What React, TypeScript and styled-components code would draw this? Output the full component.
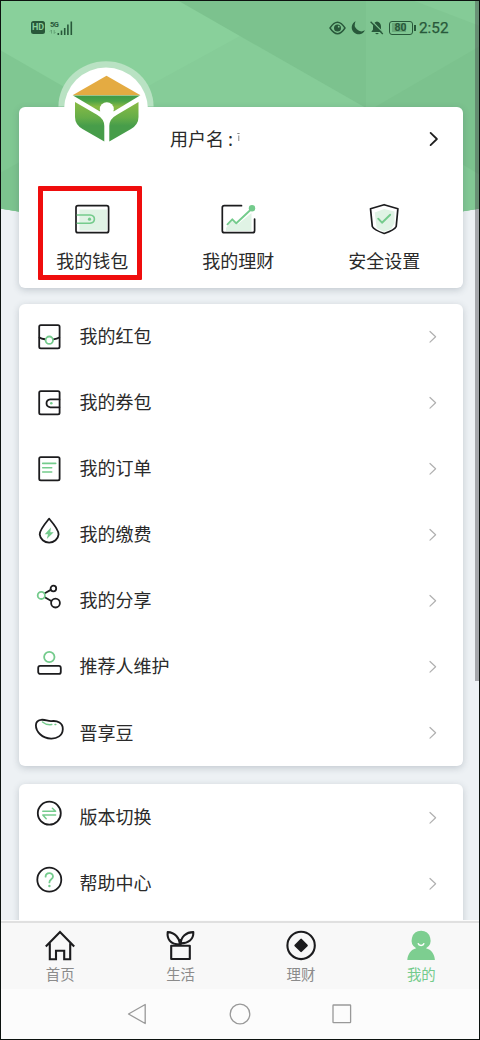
import React from 'react';
import styled, { createGlobalStyle } from 'styled-components';

const INK = '#1c1c1e';
const GREEN = '#74cb8c';
const PALE = '#e0f3e5';
const STATUS = '#28583a';

const GlobalStyle = createGlobalStyle`
  * { box-sizing: border-box; }
  body { margin: 0; font-family: "Noto Sans CJK SC", sans-serif; color: #2a2a2a; }
  svg { display: block; overflow: visible; flex: none; }
`;

const Phone = styled.div`
  position: relative;
  width: 480px;
  height: 1040px;
  display: flex;
  flex-direction: column;
  overflow: hidden;
  background: #fcfcfc;
`;

const Frame = styled.div`
  position: absolute;
  inset: 0;
  border: 1px solid #0c120f;
  pointer-events: none;
`;

const ScrollThumb = styled.div`
  position: absolute;
  top: 1px;
  right: 1px;
  width: 4px;
  height: 680px;
  background: rgba(70, 70, 74, 0.43);
`;

const Viewport = styled.main`
  position: relative;
  height: 920px;
  overflow: hidden;
  background: #edf1f4;
  flex: none;
`;

const Backdrop = styled.svg`
  position: absolute;
  top: 0;
  left: 0;
`;

const StatusBar = styled.div`
  position: relative;
  height: 106.5px;
  padding: 18px 31px 0;
  display: flex;
  justify-content: space-between;
  align-items: flex-start;
  color: ${STATUS};
  font-family: Roboto, sans-serif;
`;

const StatusGroup = styled.div<{ $gap: number }>`
  display: flex;
  align-items: center;
  height: 19px;
  gap: ${(p) => p.$gap}px;
`;

const HdBadge = styled.span`
  width: 14px;
  height: 13px;
  border-radius: 2.5px;
  background: ${STATUS};
  color: #8ad09b;
  font-size: 9px;
  font-weight: 700;
  line-height: 13.5px;
  text-align: center;
`;

const Signal = styled.div`
  display: flex;
  align-items: flex-end;
  height: 14px;
`;

const NetType = styled.span`
  align-self: flex-start;
  width: 7px;
  font-size: 7.5px;
  font-weight: 700;
  line-height: 7px;
  letter-spacing: -0.6px;
`;

const Battery = styled.span`
  position: relative;
  width: 24px;
  height: 14px;
  border: 1.3px solid ${STATUS};
  border-radius: 3px;
  background: linear-gradient(${STATUS}44, ${STATUS}44) 2px 1.5px / 14px 9px no-repeat;
  font-size: 10.5px;
  font-weight: 700;
  line-height: 12px;
  text-align: center;
  &::after {
    content: '';
    position: absolute;
    right: -4px;
    top: 3px;
    width: 1.6px;
    height: 6px;
    background: ${STATUS};
  }
`;

const Clock = styled.span`
  margin-left: 1.5px;
  width: 30px;
  font-size: 15.3px;
  line-height: 19px;
  padding-top: 1px;
  font-weight: 400;
  -webkit-text-stroke: 0.25px ${STATUS};
  white-space: nowrap;
`;

const Card = styled.section<{ $gap?: number }>`
  position: relative;
  width: 444px;
  margin: ${(p) => p.$gap ?? 0}px 0 0 19px;
  border-radius: 6px;
  background: #fff;
  box-shadow: 0 2px 7px rgba(60, 75, 90, 0.24);
`;

const ProfileCard = styled(Card)`
  height: 181.5px;
`;

const Avatar = styled.svg`
  position: absolute;
  left: 37px;
  top: -47.5px;
`;

const UserRow = styled.div`
  height: 64px;
  padding: 0 24px 0 151px;
  display: flex;
  align-items: center;
  font-size: 18px;
`;

const UserName = styled.span`
  padding-bottom: 2px;
  white-space: pre;
`;

const NameRemnant = styled.svg`
  margin: 0 auto 0 4px;
`;

const Shortcuts = styled.div`
  display: grid;
  grid-template-columns: repeat(3, 146px);
  height: 117px;
  padding-top: 32px;
`;

const Shortcut = styled.div`
  display: flex;
  flex-direction: column;
  align-items: center;
  font-size: 18px;
  line-height: 26px;
  gap: 12.4px;
  padding-left: 0.5px;
`;

const Highlight = styled.div`
  position: absolute;
  left: 19px;
  top: 79.5px;
  width: 104px;
  height: 94px;
  border: 5px solid #ef0d0d;
  border-radius: 1px;
`;

const Row = styled.div`
  height: 66.1px;
  padding: 0 25px 0 14px;
  display: flex;
  align-items: center;
  font-size: 18px;
`;

const RowLabel = styled.span`
  flex: 1;
  margin-left: 14.5px;
  padding-bottom: 3.2px;
  line-height: 26px;
`;

const TabBar = styled.nav`
  height: 67.5px;
  margin-top: 1px;
  border-top: 2px solid #e0e0e0;
  background: #f8f8f8;
  display: grid;
  grid-template-columns: repeat(4, 120.4px);
  flex: none;
`;

const Tab = styled.div<{ $active?: boolean }>`
  display: flex;
  flex-direction: column;
  align-items: center;
  padding-top: 6px;
  font-size: 14.4px;
  line-height: 20px;
  gap: 2.5px;
  color: ${(p) => (p.$active ? GREEN : '#8b8b8b')};
`;

const SystemBar = styled.footer`
  flex: 1;
  display: flex;
  justify-content: center;
  align-items: center;
  gap: 80px;
`;

const line = { fill: 'none', strokeLinecap: 'round', strokeLinejoin: 'round' } as const;

const Chevron = ({ dark = false }: { dark?: boolean }) => (
  <svg width="10" height="14" viewBox="0 0 10 14" {...line} stroke={dark ? '#1f1f1f' : '#b0b0b0'} strokeWidth={dark ? 1.8 : 1.2}>
    <path d={dark ? 'M1.6 .9 7.9 7 1.6 13.1' : 'M2 1.5 7.6 6.8 2 12.1'} />
  </svg>
);

const ListIcon = ({ children }: { children: React.ReactNode }) => (
  <svg width="32" height="32" viewBox="0 0 32 32" {...line} stroke={INK} strokeWidth="1.8">
    {children}
  </svg>
);

const sheet = <rect x="6.2" y="4.1" width="20.4" height="23.2" rx="1.6" />;

const mainRows = [
  {
    label: '我的红包',
    icon: (
      <>
        {sheet}
        <path d="M6.5 16.4C8.5 17.7 10.5 18 12.2 18.3M20.4 18.3C22.4 18 24.3 17.6 26.3 16.4" />
        <circle cx="16.3" cy="19.2" r="3.7" stroke={GREEN} />
      </>
    ),
  },
  {
    label: '我的券包',
    icon: (
      <>
        {sheet}
        <path d="M26.4 12.4H17.3Q13.5 12.8 13.5 16.3T17.3 20.3H26.4" />
        <circle cx="18.3" cy="16.3" r="1.3" fill={GREEN} stroke="none" />
      </>
    ),
  },
  {
    label: '我的订单',
    icon: (
      <>
        {sheet}
        <path d="M9.7 10.4H22.7M9.7 14.7H18.7M9.7 19H18.7" stroke={GREEN} strokeWidth="1.6" />
      </>
    ),
  },
  {
    label: '我的缴费',
    icon: (
      <>
        <path d="M16.1-.3C12.6 4 6.7 10.5 6.7 15.4A9.5 9.2 0 0 0 25.6 15.4C25.6 10.5 19.8 4 16.1-.3Z" />
        <path d="M17.9 8.6 11.7 15.2H15L13.8 20 20.7 13.2H17.3Z" fill={GREEN} stroke="none" />
      </>
    ),
  },
  {
    label: '我的分享',
    icon: (
      <>
        <path d="M11.8 8.2 17.7 4.9M11.8 12.3 18.3 16" />
        <circle cx="8.3" cy="10.4" r="3.6" stroke={GREEN} />
        <circle cx="20.4" cy="3.5" r="2.8" />
        <circle cx="22.5" cy="18.1" r="4.4" />
      </>
    ),
  },
  {
    label: '推荐人维护',
    icon: (
      <>
        <circle cx="16.3" cy="6" r="5.2" stroke={GREEN} />
        <rect x="5.2" y="14.9" width="22.6" height="8" rx="2" />
      </>
    ),
  },
  {
    label: '晋享豆',
    icon: (
      <>
        <path d="M7.8 2.9C12 2 14.3 4.4 18.3 4.2 24.5 3.3 30 6.2 29.8 12.2 29.6 18.6 24 21.8 18 21.6 9.2 21.3 2.8 14.7 2.9 8.3 3 5.1 4.8 3.3 7.8 2.9Z" />
        <path d="M9.5 5C12 7.2 15.3 8 18.8 7.6M22 7.4H22.8" stroke={GREEN} strokeWidth="1.5" />
      </>
    ),
  },
];

const moreRows = [
  {
    label: '版本切换',
    icon: (
      <>
        <circle cx="16.3" cy="11.2" r="11.5" />
        <path d="M9.8 9.2H22.6L19.4 6.3M22.6 13H9.8L13.2 16.7" stroke={GREEN} strokeWidth="1.5" />
      </>
    ),
  },
  {
    label: '帮助中心',
    icon: (
      <>
        <circle cx="16.3" cy="11.7" r="12" />
        <path d="M12.6 8.7C12.7 3.8 20 4 20 8.5 20 11.4 16.4 11.2 16.4 14.4" stroke={GREEN} />
        <circle cx="16.4" cy="18" r="1.2" fill={GREEN} stroke="none" />
      </>
    ),
  },
];

const TabIcon = ({ children }: { children: React.ReactNode }) => (
  <svg width="32" height="32" viewBox="0 0 32 32" fill="none" stroke={INK} strokeWidth="2.1" strokeLinejoin="round">
    {children}
  </svg>
);

const tabs = [
  {
    label: '首页',
    icon: (
      <path d="M1.8 17.4 16 3 30.2 17.4M5.8 14.2V30.2H12V21.8H20.2V30.2H26.2V14.2" strokeLinejoin="miter" />
    ),
  },
  {
    label: '生活',
    icon: (
      <>
        <path d="M15.2 15.6C14.5 9 10 3.4 2.7 3.1 2 9.2 4.5 15.4 15.2 15.6ZM15.8 14.4C15.9 8 21.2 3 28.3 3.1 28.7 10.4 23.3 14.5 15.8 14.4Z" />
        <path d="M15.5 10V16.8M6.2 16.8H24.8V30H6.2Z" />
      </>
    ),
  },
  {
    label: '理财',
    icon: (
      <>
        <circle cx="16.1" cy="16.4" r="13.7" />
        <path d="M16.1 10.7 21.8 16.4 16.1 22.1 10.4 16.4Z" fill={INK} />
      </>
    ),
  },
  {
    label: '我的',
    active: true,
    icon: (
      <>
        <path
          d="M16.1 1.7A9.5 9.5 0 0 1 21 19.3C26.5 20.6 29.6 25.5 29.9 31H2.3C2.7 25.5 5.8 20.6 11.2 19.3A9.5 9.5 0 0 1 16.1 1.7Z"
          fill="#7dce90"
          stroke="none"
        />
        <path d="M13 14.3C14 17.1 18.2 17.1 19.1 14.3" stroke="#fff" strokeWidth="1.5" />
      </>
    ),
  },
];

export default function App() {
  return (
    <Phone>
      <GlobalStyle />
      <Viewport>
        <Backdrop width="480" height="216" viewBox="0 0 480 216">
          <clipPath id="hero">
            <path d="M0 0H480V208.5Q240 250 0 208.5Z" />
          </clipPath>
          <g clipPath="url(#hero)">
            <rect width="480" height="230" fill="#89d09b" />
            <path d="M0 50 80 96V230H0Z" fill="#80c792" />
            <path d="M0 173 50 145V230H0Z" fill="#7cc38e" />
            <path d="M240 36 110 107H370Z" fill="#86cc98" />
            <path d="M177 0H366V108Z" fill="#7cc28e" />
            <path d="M366 0H480V110H366Z" fill="#80c692" />
            <path d="M412 0H480V26Z" fill="#85cb97" />
            <path d="M480 46 375 107V230H480Z" fill="#7cc28e" />
            <path d="M480 175 455 160V230H480Z" fill="#82c894" />
          </g>
        </Backdrop>

        <StatusBar>
          <StatusGroup $gap={5}>
            <HdBadge>HD</HdBadge>
            <Signal>
              <NetType>5G</NetType>
              <svg width="16" height="14" viewBox="0 0 16 14" stroke={STATUS} strokeWidth="1.6">
                <path d="M1.3 14V12M4.5 14V9.5M7.7 14V7M10.9 14V3.5M14.3 14V.5" />
                <path d="M-5.5 9V12.5M-7 10.5 -5.5 9M-2.8 9V12.5M-2.8 12.5 -1.4 11" strokeWidth=".7" opacity=".5" />
              </svg>
            </Signal>
          </StatusGroup>
          <StatusGroup $gap={5}>
            <svg width="17" height="14" viewBox="0 0 17 14" fill="none" stroke={STATUS} strokeWidth="1.4">
              <path d="M1 7Q8.5-4.5 16 7 8.5 18.5 1 7Z" />
              <circle cx="8.5" cy="7" r="3.5" fill={STATUS} stroke="none" />
              <circle cx="9.7" cy="5.7" r=".9" fill="#81c793" stroke="none" />
            </svg>
            <svg width="14" height="14" viewBox="0 0 14 14" fill={STATUS}>
              <path d="M4.7.2A6.9 6.9 0 1 0 13.9 9.3 6.7 6.7 0 0 1 4.7.2Z" />
            </svg>
            <svg width="14" height="14" viewBox="0 0 14 14">
              <path d="M7 .4C10 1 11 3 11 5.8V8.5L12.7 11H1.3L3 8.5V5.8C3 3 4 1 7 .4ZM5.3 12H8.7A1.8 1.8 0 0 1 5.3 12Z" fill={STATUS} />
              <path d="M1.7 0 13.8 12.1" stroke="#81c793" strokeWidth="1.3" />
              <path d="M.6.8 12.8 13" stroke={STATUS} strokeWidth="1.3" />
            </svg>
            <Battery>80</Battery>
            <Clock>2:52</Clock>
          </StatusGroup>
        </StatusBar>

        <ProfileCard>
          <Avatar width="100" height="90" viewBox="56 59 100 90">
            <defs>
              <linearGradient id="leafTop" x1="0" y1="0" x2="0" y2="1">
                <stop offset="0" stopColor="#3f9a48" />
                <stop offset=".35" stopColor="#4da346" />
                <stop offset=".7" stopColor="#87b944" />
                <stop offset="1" stopColor="#7eb646" />
              </linearGradient>
              <linearGradient id="leafSide" x1="0" y1="0" x2="0" y2="1">
                <stop offset="0" stopColor="#8abb45" />
                <stop offset=".4" stopColor="#65ad48" />
                <stop offset=".6" stopColor="#479d4a" />
                <stop offset="1" stopColor="#479d4a" />
              </linearGradient>
            </defs>
            <path d="M58.4 106.5A47.6 45.3 0 0 1 153.6 106.5Z" fill="#b9e2c3" />
            <circle cx="106" cy="109.5" r="42" fill="#fff" />
            <path d="M106.5 75.8 140.5 95.3H72.5Z" fill="#e4ab42" />
            <path d="M73 95.6H140L114 111.2H99.5Z" fill="url(#leafTop)" />
            <path d="M75 102 97 114.8Q104.3 119 104.3 126V141.5L82.5 129Q75 124.5 75 117Z" fill="url(#leafSide)" />
            <path d="M138.5 102 117 114.8Q109.3 119 109.3 126V141.5L131 129Q138.5 124.5 138.5 117Z" fill="url(#leafSide)" />
            <circle cx="106.8" cy="109.2" r="7" fill="#fff" />
          </Avatar>
          <UserRow>
            <UserName>用户名 :</UserName>
            <NameRemnant width="3" height="10" viewBox="0 0 3 10" fill="none" stroke="#777" strokeWidth=".9">
              <path d="M.3 -.5H2.6M1.8 1.5V7" />
            </NameRemnant>
            <Chevron dark />
          </UserRow>
          <Shortcuts>
            <Shortcut>
              <svg width="36" height="32" viewBox="74 203 36 32" {...line} stroke={INK} strokeWidth="1.7">
                <rect x="79.5" y="209.5" width="27.5" height="21" fill={PALE} stroke="none" />
                <rect x="76" y="205.7" width="32.6" height="27" rx="2" />
                <path d="M77.3 215H90Q94.4 215.3 94.4 219T90 223.3H77.3" stroke={GREEN} strokeWidth="1.6" />
                <circle cx="89.5" cy="219.2" r="1.6" fill={GREEN} stroke="none" />
              </svg>
              我的钱包
            </Shortcut>
            <Shortcut>
              <svg width="36" height="32" viewBox="220 203 36 32" {...line} stroke={INK} strokeWidth="1.7">
                <path d="M226 228 232 221 238 224 251.5 213V231H226Z" fill={PALE} stroke="none" />
                <path d="M241.5 205.7H224.3Q222.3 205.7 222.3 207.7V230.7Q222.3 232.7 224.3 232.7H252.6Q254.6 232.7 254.6 230.7V219" />
                <path d="M227.5 224.3 232.3 219.3 236.3 223.3 251.5 209" stroke={GREEN} strokeWidth="1.9" />
                <circle cx="252" cy="208.3" r="3.2" fill={GREEN} stroke="none" />
              </svg>
              我的理财
            </Shortcut>
            <Shortcut>
              <svg width="36" height="32" viewBox="366.3 203 36 32" {...line} stroke={INK} strokeWidth="1.7">
                <path d="M375 212.4 384.5 209 394.8 211.4V223L391.5 229 384 231.8 377 228Z" fill={PALE} stroke="none" />
                <path d="M384.4 204.7 398.2 208.7 396.5 226.5Q395 230 384.5 233.5 374.3 230 372.6 226.5L370.8 208.7Z" />
                <path d="M378.5 218.7 382.3 222.7 390.5 214.7" stroke={GREEN} strokeWidth="1.9" />
              </svg>
              安全设置
            </Shortcut>
          </Shortcuts>
          <Highlight />
        </ProfileCard>

        <Card $gap={15.5}>
          {mainRows.map((r) => (
            <Row key={r.label}>
              <ListIcon>{r.icon}</ListIcon>
              <RowLabel>{r.label}</RowLabel>
              <Chevron />
            </Row>
          ))}
        </Card>

        <Card $gap={18.3}>
          {moreRows.map((r) => (
            <Row key={r.label}>
              <ListIcon>{r.icon}</ListIcon>
              <RowLabel>{r.label}</RowLabel>
              <Chevron />
            </Row>
          ))}
          <Row />
        </Card>
      </Viewport>

      <TabBar>
        {tabs.map((t) => (
          <Tab key={t.label} $active={t.active}>
            <TabIcon>{t.icon}</TabIcon>
            {t.label}
          </Tab>
        ))}
      </TabBar>

      <SystemBar>
        <svg width="22" height="22" viewBox="0 0 22 22" {...line} stroke="#999" strokeWidth="1.3">
          <path d="M18.2 1.5V20.5L1.5 11Z" />
        </svg>
        <svg width="22" height="22" viewBox="0 0 22 22" {...line} stroke="#999" strokeWidth="1.3">
          <circle cx="11" cy="11" r="9.8" />
        </svg>
        <svg width="22" height="22" viewBox="0 0 22 22" {...line} stroke="#999" strokeWidth="1.3">
          <rect x="2" y="2" width="17.6" height="17.6" rx=".6" />
        </svg>
      </SystemBar>
      <ScrollThumb />
      <Frame />
    </Phone>
  );
}
